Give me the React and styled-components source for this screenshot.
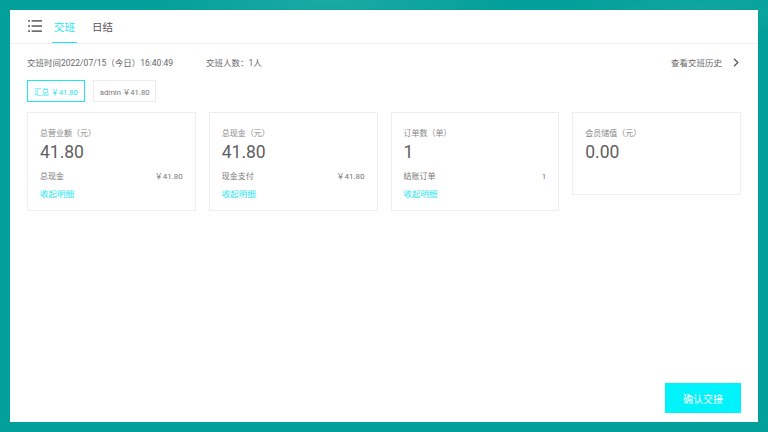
import styled, { createGlobalStyle } from "styled-components"

const GlobalStyle = createGlobalStyle`
    html, body {
        margin: 0;
        padding: 0;
        width: 768px;
        height: 432px;
        overflow: hidden;
        font-family: Roboto, "Noto Sans CJK SC", sans-serif;
        background: #02a09a;
    }
`;

const CYAN = "#1ee6f2";

const cards = [
    { label: "总营业额（元）", value: "41.80", row: ["总现金", "￥41.80"] },
    { label: "总现金（元）", value: "41.80", row: ["现金支付", "￥41.80"] },
    { label: "订单数（单）", value: "1", row: ["结账订单", "1"] },
    { label: "会员储值（元）", value: "0.00" },
];

const MenuIcon = () => (
    <svg width="14" height="12" viewBox="0 0 14 12" fill="#333">
        <rect x="0" y="0.3" width="2" height="1.2" />
        <rect x="3.6" y="0.3" width="10.4" height="1.2" />
        <rect x="0" y="5.4" width="2" height="1.2" />
        <rect x="3.6" y="5.4" width="10.4" height="1.2" />
        <rect x="0" y="10.5" width="2" height="1.2" />
        <rect x="3.6" y="10.5" width="10.4" height="1.2" />
    </svg>
);

const Chevron = () => (
    <svg width="6" height="9" viewBox="0 0 6 9" fill="none" stroke="#555" strokeWidth="1.2">
        <path d="M1 0.8 L4.8 4.5 L1 8.2" />
    </svg>
);

const App = () => {
    return <Screen>
        <GlobalStyle />
        <Panel>
            <Header>
                <MenuButton><MenuIcon /></MenuButton>
                <Tab $active>交班</Tab>
                <Tab>日结</Tab>
            </Header>
            <Main>
                <InfoRow>
                    <InfoText>交班时间2022/07/15（今日）16:40:49</InfoText>
                    <InfoText $gap>交班人数：1人</InfoText>
                    <HistoryLink>
                        <span>查看交班历史</span>
                        <Chevron />
                    </HistoryLink>
                </InfoRow>
                <Chips>
                    <Chip $active>汇总 ￥41.80</Chip>
                    <Chip>admin ￥41.80</Chip>
                </Chips>
                <CardGrid>
                    {cards.map((c) => (
                        <Card key={c.label} $short={!c.row}>
                            <CardLabel>{c.label}</CardLabel>
                            <CardValue>{c.value}</CardValue>
                            {c.row && <>
                                <DetailRow>
                                    <span>{c.row[0]}</span>
                                    <span>{c.row[1]}</span>
                                </DetailRow>
                                <Collapse>收起明细</Collapse>
                            </>}
                        </Card>
                    ))}
                </CardGrid>
            </Main>
            <Footer>
                <ConfirmButton>确认交接</ConfirmButton>
            </Footer>
        </Panel>
    </Screen>
};

const Screen = styled.div`
    width: 768px;
    height: 432px;
    padding: 10px;
    box-sizing: border-box;
    background:
        radial-gradient(ellipse 260px 60px at 330px 0px, rgba(255,255,255,0.10), transparent 70%),
        radial-gradient(ellipse 200px 40px at 700px 10px, rgba(255,255,255,0.06), transparent 70%),
        #02a09a;
`;

const Panel = styled.div`
    width: 748px;
    height: 412px;
    background: #fff;
    display: flex;
    flex-direction: column;
`;

const Header = styled.div`
    height: 34px;
    box-sizing: border-box;
    border-bottom: 1px solid #f0f0f0;
    display: flex;
    align-items: stretch;
    padding-left: 18px;
`;

const MenuButton = styled.div`
    display: flex;
    align-items: center;
    padding-bottom: 1px;
    margin-right: 10px;
`;

const Tab = styled.div`
    position: relative;
    display: flex;
    align-items: center;
    font-size: 10.5px;
    color: ${p => p.$active ? CYAN : "#555"};
    padding: 0 2px;
    margin-right: 13px;
    &::after {
        content: "";
        display: ${p => p.$active ? "block" : "none"};
        position: absolute;
        left: 0;
        right: 0;
        bottom: 0;
        height: 1.5px;
        background: ${CYAN};
    }
`;

const Main = styled.div`
    flex: 1;
    padding: 0 17px;
`;

const InfoRow = styled.div`
    height: 36px;
    display: flex;
    align-items: center;
`;

const InfoText = styled.span`
    font-size: 8.5px;
    color: #666;
    margin-left: ${p => p.$gap ? "33px" : "0"};
`;

const HistoryLink = styled.div`
    margin-left: auto;
    display: flex;
    align-items: center;
    gap: 11px;
    padding-right: 2px;
    font-size: 8.5px;
    color: #666;
`;

const Chips = styled.div`
    display: flex;
    gap: 8px;
`;

const Chip = styled.div`
    height: 22px;
    box-sizing: border-box;
    padding: 0 6px;
    display: flex;
    align-items: center;
    font-size: 7.6px;
    border: 1px solid ${p => p.$active ? CYAN : "#ececec"};
    color: ${p => p.$active ? CYAN : "#777"};
`;

const CardGrid = styled.div`
    display: grid;
    grid-template-columns: repeat(4, 1fr);
    gap: 13px;
    align-items: start;
    margin-top: 10px;
`;

const Card = styled.div`
    border: 1px solid #eee;
    padding: 15px 12px ${p => p.$short ? "31px" : "10px"} 12px;
    display: flex;
    flex-direction: column;
`;

const CardLabel = styled.div`
    font-size: 8px;
    line-height: 12px;
    color: #888;
`;

const CardValue = styled.div`
    font-size: 17.5px;
    line-height: 22px;
    color: #606060;
    margin-top: 1px;
`;

const DetailRow = styled.div`
    display: flex;
    justify-content: space-between;
    font-size: 8px;
    line-height: 12px;
    color: #777;
    margin-top: 8px;
`;

const Collapse = styled.div`
    font-size: 8.5px;
    line-height: 12px;
    color: ${CYAN};
    margin-top: 5px;
`;

const Footer = styled.div`
    display: flex;
    justify-content: flex-end;
    padding: 0 17px 9px;
`;

const ConfirmButton = styled.button`
    width: 76px;
    height: 30px;
    border: none;
    background: #00f2fb;
    color: #fff;
    font-family: Roboto, "Noto Sans CJK SC", sans-serif;
    font-size: 10px;
    padding: 0;
`;

export default App;
